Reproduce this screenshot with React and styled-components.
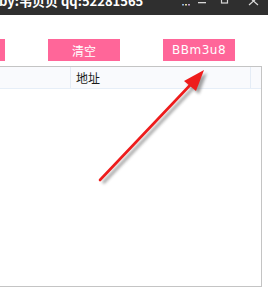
import React from 'react';
import styled, { createGlobalStyle } from 'styled-components';

const GlobalStyle = createGlobalStyle`
  html, body {
    margin: 0;
    padding: 0;
    background: #ffffff;
    overflow: hidden;
  }
`;

const Window = styled.div`
  position: relative;
  width: 268px;
  height: 290px;
  overflow: hidden;
  background: #ffffff;
  font-family: "Noto Sans CJK SC", "Noto Sans", sans-serif;
`;

const TitleBar = styled.div`
  height: 15px;
  background: #2f2f2f;
  display: flex;
  align-items: flex-end;
  justify-content: space-between;
  overflow: hidden;
`;

const Title = styled.div`
  color: #ffffff;
  font-size: 13px;
  font-weight: 700;
  line-height: 13px;
  white-space: nowrap;
  margin-bottom: 8px;
  margin-left: -1px;
`;

const Controls = styled.div`
  display: flex;
  align-items: flex-end;
  height: 15px;
`;

const Ctl = styled.div`
  width: ${p => p.w || 24}px;
  height: 15px;
  display: flex;
  justify-content: center;
  align-items: flex-start;
  color: #d8d8d8;
`;

const ButtonsRow = styled.div`
  display: flex;
  gap: 43px;
  margin: 24px 0 0 -67px;
`;

const PinkButton = styled.div`
  width: 72px;
  height: 22px;
  background: #ff6699;
  color: #ffffff;
  font-size: 12px;
  display: flex;
  align-items: center;
  justify-content: center;
  font-family: ${p => (p.latin ? '"DejaVu Sans", sans-serif' : '"Noto Sans CJK SC", sans-serif')};
  letter-spacing: ${p => (p.latin ? '0.5px' : '0')};
`;

const Table = styled.div`
  margin: 5px 0 0 -10px;
  width: 272px;
  height: 221px;
  border: 1px solid #c4c4c4;
  border-left: none;
  box-sizing: border-box;
`;

const HeaderRow = styled.div`
  display: flex;
  height: 22px;
  background: #f9fafd;
  border-bottom: 1px solid #e6eef8;
  box-sizing: border-box;
`;

const HeaderCell = styled.div`
  width: ${p => p.w}px;
  flex: ${p => (p.grow ? 1 : 'none')};
  border-right: ${p => (p.last ? 'none' : '1px solid #e4ecf6')};
  font-size: 12px;
  color: #1a1a1a;
  display: flex;
  align-items: center;
  padding-left: 5px;
  box-sizing: border-box;
`;

const Arrow = styled.svg`
  position: absolute;
  left: 0;
  top: 0;
`;

export default function App() {
  return (
    <Window>
      <GlobalStyle />
      <TitleBar>
        <Title>by:韦贝贝 qq:52281565</Title>
        <Controls>
          <Ctl w={16}>
            <svg width="10" height="15">
              <rect x="1" y="4" width="2" height="1.5" fill="#8fb4e0" />
              <rect x="4" y="4" width="2" height="1.5" fill="#e0d8a0" />
              <rect x="7" y="4" width="2" height="1.5" fill="#c0a0d0" />
            </svg>
          </Ctl>
          <Ctl w={16}>
            <svg width="10" height="15"><rect x="1" y="2" width="8" height="1.3" fill="#d8d8d8" /></svg>
          </Ctl>
          <Ctl w={30}>
            <svg width="10" height="15"><rect x="1.5" y="-4" width="6" height="7" fill="none" stroke="#d8d8d8" strokeWidth="1.2" /></svg>
          </Ctl>
          <Ctl w={28}>
            <svg width="12" height="15"><path d="M1 -3 L10 5 M10 -3 L1 5" stroke="#d8d8d8" strokeWidth="1.2" /></svg>
          </Ctl>
        </Controls>
      </TitleBar>
      <ButtonsRow>
        <PinkButton />
        <PinkButton>清空</PinkButton>
        <PinkButton latin>BBm3u8</PinkButton>
      </ButtonsRow>
      <Table>
        <HeaderRow>
          <HeaderCell w={81} />
          <HeaderCell w={180}>地址</HeaderCell>
          <HeaderCell grow last />
        </HeaderRow>
      </Table>
      <Arrow width="268" height="290">
        <defs>
          <filter id="sh" x="-20%" y="-20%" width="140%" height="140%">
            <feGaussianBlur stdDeviation="1.5" />
          </filter>
        </defs>
        <g transform="translate(3,3)" filter="url(#sh)" opacity="0.55">
          <line x1="100" y1="180" x2="194" y2="81" stroke="#555" strokeWidth="3" />
          <polygon points="204,70 184,81 196,91" fill="#555" />
        </g>
        <line x1="100" y1="180" x2="194" y2="81" stroke="#ee1c1c" strokeWidth="2.6" strokeLinecap="round" />
        <polygon points="204,70 184,81 196,91" fill="#ee1c1c" />
      </Arrow>
    </Window>
  );
}
